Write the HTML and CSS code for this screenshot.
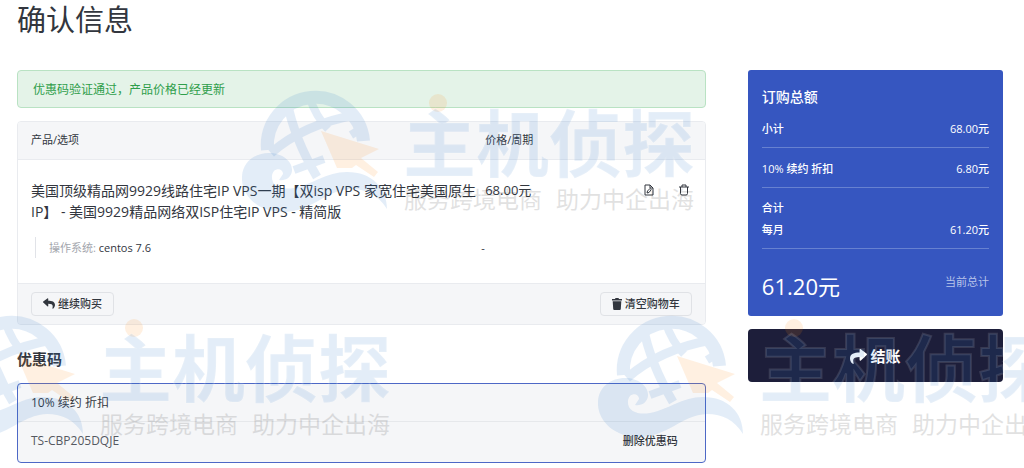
FILE: index.html
```html
<!DOCTYPE html>
<html lang="zh-CN">
<head>
  <meta charset="UTF-8">
  <title>确认信息</title>
  <link rel="stylesheet" href="styles.css">
</head>
<body>
  <div class="page">
    <h1>确认信息</h1>

    <div class="columns">
      <main>
        <div class="alert" role="status">优惠码验证通过，产品价格已经更新</div>

        <section class="cart">
          <table>
            <thead>
              <tr>
                <th class="col-product">产品/选项</th>
                <th class="col-price">价格/周期</th>
                <th class="col-actions"></th>
              </tr>
            </thead>
            <tbody>
              <tr class="product">
                <td class="name">美国顶级精品网9929线路住宅IP VPS一期【双isp VPS 家宽住宅美国原生IP】 - 美国9929精品网络双ISP住宅IP VPS - 精简版</td>
                <td class="price">68.00元</td>
                <td class="actions">
                  <div class="icons">
                    <button type="button" aria-label="编辑">
                      <svg width="10" height="12" viewBox="0 0 10 12" fill="none" stroke="currentColor"><path d="M1 1h5l3 3v7H1zM6 1v3h3M3 9l.5-2L6 4.500l1.200 1.200L5 8.500z"/></svg>
                    </button>
                    <button type="button" aria-label="删除">
                      <svg width="10" height="12" viewBox="0 0 10 12" fill="none" stroke="currentColor"><path d="M0 3h10M1.500 3v6.500q0 1.500 1.500 1.500h4q1.500 0 1.500-1.500V3M3 3V1h4v2"/></svg>
                    </button>
                  </div>
                </td>
              </tr>
              <tr class="options">
                <td><div class="option"><span>操作系统:</span> centos 7.6</div></td>
                <td class="option-price">-</td>
                <td></td>
              </tr>
            </tbody>
          </table>
          <div class="cart-footer">
            <button type="button" class="btn">
              <svg width="12" height="11" viewBox="0 0 512 448" fill="currentColor"><path d="M9 142 185 6c15-13 39-3 39 18v80c161 2 288 34 288 186 0 61-39 122-83 154-14 10-33-2-28-19 45-145-22-184-177-186v88c0 21-24 31-39 18L9 178c-12-10-12-26 0-36z"/></svg>
              继续购买
            </button>
            <button type="button" class="btn">
              <svg width="10" height="12" viewBox="0 0 10 12" fill="currentColor"><path d="M0 1h3l.5-1h3L7 1h3v1.500H0zM.7 3.200h8.600L8.800 11q-.1 1-1 1H2.200q-.9 0-1-1z"/></svg>
              清空购物车
            </button>
          </div>
        </section>

        <section class="promo">
          <h2>优惠码</h2>
          <div class="promo-box">
            <div class="promo-title">10% 续约 折扣</div>
            <div class="promo-code">
              <span>TS-CBP205DQJE</span>
              <button type="button">删除优惠码</button>
            </div>
          </div>
        </section>
      </main>

      <aside>
        <section class="summary">
          <h3>订购总额</h3>
          <div class="line">小计 <span>68.00元</span></div>
          <div class="line">10% 续约 折扣 <span>6.80元</span></div>
          <div class="line label">合计</div>
          <div class="line">每月 <span>61.20元</span></div>
          <div class="total">
            <strong>61.20元</strong>
            <span>当前总计</span>
          </div>
        </section>
        <button type="button" class="checkout">
          <svg width="17" height="15" viewBox="0 0 512 448" fill="currentColor"><path d="M503 142 327 6c-15-13-39-3-39 18v80C127 106 0 138 0 290c0 61 39 122 83 154 14 10 33-2 28-19-45-145 22-184 177-186v88c0 21 24 31 39 18l176-167c12-10 12-26 0-36z"/></svg>
          结账
        </button>
      </aside>
    </div>
  </div>

  <!-- site watermark, laid over the page -->
  <svg class="defs" aria-hidden="true">
    <symbol id="mark" viewBox="0 0 460 130">
      <g class="mark-blue-line">
        <path stroke-width="13" d="M25.500 62A48 48 0 1 1 121.500 53"/>
        <path stroke-width="9" d="M29 65Q62 36 114 27"/>
        <path stroke-width="9" d="M45 13Q52 50 75 89"/>
        <path stroke-width="8" d="M67 8Q74 29 86 41"/>
        <path stroke-width="8" d="M52 82 82 71"/>
        <path stroke-width="8" d="M109 47 117 42"/>
      </g>
      <path class="mark-blue" d="M0 92C-1 75 12 65 27 65 41 65 51 74 50 83 49 90 43 93 37 92L41 86C41 80 31 79 30 88 29 99 41 102 52 100 72 96 84 84 105 84 130 84 145 100 145 121 136 107 125 101 109 101 83 102 70 124 41 124 17 124 1 109 0 92z"/>
      <path class="mark-orange" d="M79 43 137 61 119 70 136 84 132 89 114 77 110 80H95z"/>
      <circle class="mark-orange" cx="196" cy="15" r="9"/>
      <text class="mark-name" x="161" y="83">主机侦探</text>
      <text class="mark-slogan" x="162" y="120">服务跨境电商</text>
      <text class="mark-slogan" x="314" y="120">助力中企出海</text>
    </symbol>
  </svg>
  <div class="watermarks" aria-hidden="true">
    <svg class="mark mark-1"><use href="#mark"/></svg>
    <svg class="mark mark-2"><use href="#mark"/></svg>
    <svg class="mark mark-3"><use href="#mark"/></svg>
  </div>
</body>
</html>
```
FILE: styles.css
```css
* {
  box-sizing: border-box;
}
body {
  margin: 0;
  min-height: 100vh;
  position: relative;
  font-family: "Open Sans", "Noto Sans CJK SC", sans-serif;
  font-size: 11px;
  line-height: 16px;
  color: #32363e;
  background: #fff;
}
button {
  font: inherit;
  color: inherit;
  background: none;
  border: 0;
  padding: 0;
  cursor: pointer;
}
h1, h2, h3 {
  margin: 0;
}
.page {
  padding: 0 21px 5px 17px;
}
h1 {
  font-size: 29px;
  font-weight: 400;
  line-height: 40px;
  margin-bottom: 30px;
}
.columns {
  display: grid;
  grid-template-columns: minmax(0, 27fr) minmax(0, 10fr);
  gap: 42px;
  align-items: start;
}

.alert {
  padding: 10px 15px 8px;
  margin-bottom: 13px;
  border: 1px solid #b9e2c3;
  border-radius: 4px;
  background: #e4f3e8;
  color: #2f9e4b;
  font-size: 12px;
  line-height: 18px;
}

.cart {
  border: 1px solid #e9ebef;
  border-radius: 4px;
  overflow: hidden;
}
table {
  width: 100%;
  table-layout: fixed;
  border-collapse: collapse;
}
th, td {
  padding: 0 7px;
  text-align: left;
  vertical-align: top;
  font-weight: 400;
}
th:first-child, td:first-child {
  padding: 0 0 0 13px;
}
th {
  height: 37px;
  vertical-align: middle;
  background: #f5f6f8;
  border-bottom: 1px solid #e9ebef;
}
.col-product { width: 67%; }
.col-price { width: 20%; }
.product td, .product td:first-child {
  padding-top: 20px;
}
.product .name {
  font-size: 14px;
  line-height: 21px;
}
.product .price {
  font-size: 13px;
  line-height: 21px;
}
.product .actions {
  padding-right: 16px;
}
.icons {
  display: flex;
  justify-content: flex-end;
  gap: 25px;
  padding-top: 4px;
}
.icons svg {
  display: block;
}
.options td, .options td:first-child {
  padding-top: 15px;
  padding-bottom: 25px;
}
.option {
  margin-left: 4px;
  padding-left: 13px;
  border-left: 1px solid #e1e3e8;
  line-height: 21px;
}
.option span {
  color: #a3a6ad;
}
.options .option-price {
  padding-left: 3px;
  line-height: 21px;
}
.cart-footer {
  display: flex;
  justify-content: space-between;
  padding: 8px 13px;
  border-top: 1px solid #e9ebef;
  background: #f5f6f8;
}
.btn {
  display: flex;
  align-items: center;
  gap: 3px;
  padding: 3px 11px;
  border: 1px solid #e0e2e6;
  border-radius: 4px;
  font-weight: 500;
}

.promo h2 {
  margin: 24px 0 14px;
  font-size: 15px;
  line-height: 20px;
}
.promo-box {
  border: 1px solid #4d68c6;
  border-radius: 4px;
  background: #f5f6f8;
  font-size: 12px;
}
.promo-title {
  padding: 10px 13px 9px;
  line-height: 18px;
  border-bottom: 1px solid #e6e8eb;
}
.promo-code {
  display: flex;
  justify-content: space-between;
  align-items: center;
  padding: 10px 27px 12px 13px;
  line-height: 18px;
  color: #555961;
}
.promo-code button {
  font-size: 11px;
  color: #32363e;
  font-weight: 500;
}

.summary {
  padding: 16px 14px 13px;
  border-radius: 3px;
  background: #3656c0;
  color: #fff;
  font-weight: 500;
}
.summary h3 {
  font-size: 14px;
  font-weight: 500;
  line-height: 22px;
  margin-bottom: 12px;
}
.line {
  display: flex;
  justify-content: space-between;
  padding: 1px 0 10px;
  margin-bottom: 12px;
  border-bottom: 1px solid #6781d0;
  line-height: 16px;
}
.line.label {
  padding: 0;
  margin-bottom: 5px;
  border-bottom: 0;
}
.total {
  display: flex;
  justify-content: space-between;
  align-items: center;
  padding-top: 8px;
  line-height: 34px;
}
.total strong {
  font-size: 22px;
  font-weight: 400;
}
.total span {
  font-weight: 400;
  line-height: 26px;
  align-self: flex-start;
  color: #b9c5ea;
}
.checkout {
  display: flex;
  justify-content: center;
  align-items: center;
  gap: 3px;
  width: 100%;
  margin-top: 13px;
  padding: 17px 16px 15px;
  border-radius: 4px;
  background: #1d1e3a;
  color: #fff;
  font-size: 15px;
  font-weight: 700;
  line-height: 21px;
}

.defs {
  display: none;
}
.watermarks {
  position: absolute;
  inset: 0;
  overflow: hidden;
  pointer-events: none;
}
.mark {
  position: absolute;
  width: 460px;
  height: 130px;
}
.mark-1 { left: 242px; top: 88px; }
.mark-2 { left: -62px; top: 313px; }
.mark-3 { left: 598px; top: 313px; }
.mark-blue-line {
  fill: none;
  stroke: #2774c9;
  opacity: 0.13;
}
.mark-blue {
  fill: #2774c9;
  opacity: 0.13;
}
.mark-orange {
  fill: #ff8c14;
  opacity: 0.13;
}
/* pale outline keeps the name readable on dark buttons */
.mark-name {
  font-family: "Noto Sans CJK SC", sans-serif;
  font-size: 73px;
  font-weight: 700;
  fill: #2774c9;
  fill-opacity: 0.13;
  stroke: #fff;
  stroke-opacity: 0.12;
  stroke-width: 2px;
}
.mark-slogan {
  font-family: "Noto Sans CJK SC", sans-serif;
  font-size: 23px;
  fill: #323232;
  opacity: 0.14;
}
```
